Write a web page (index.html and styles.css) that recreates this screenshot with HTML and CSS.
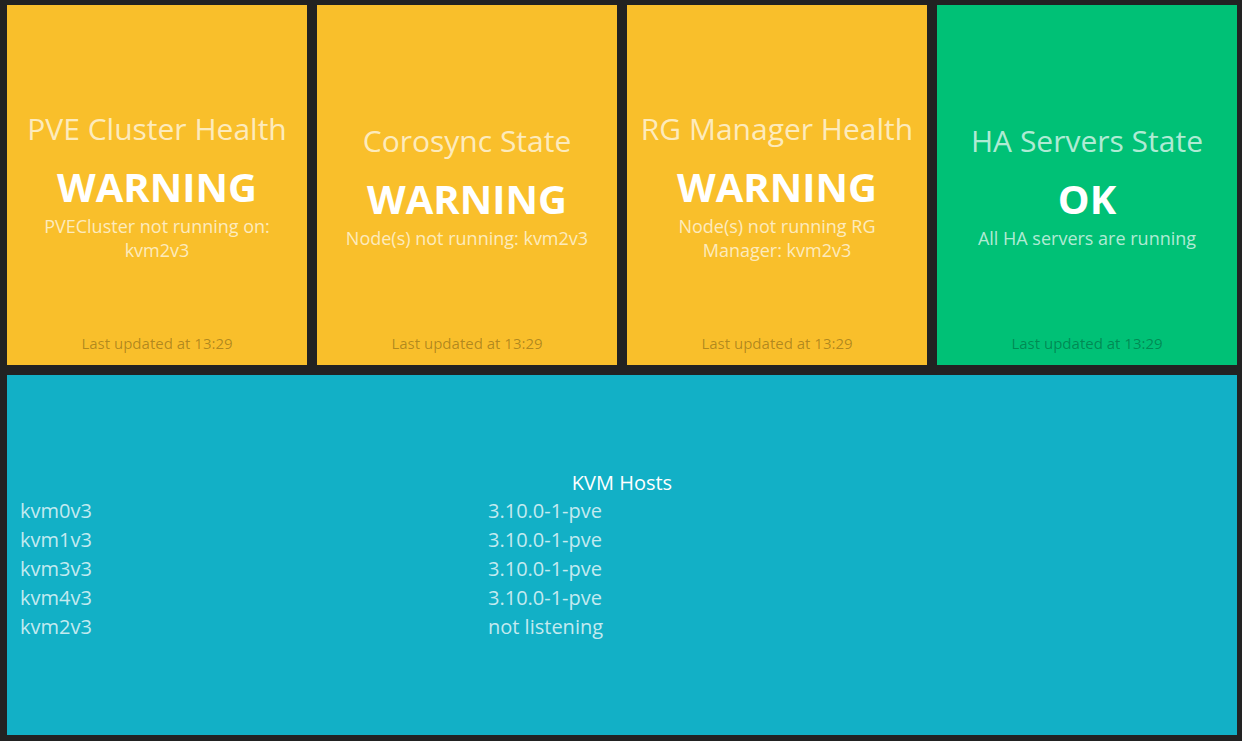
FILE: index.html
```html
<!DOCTYPE html>
<html lang="en">
<head>
<meta charset="utf-8">
<title>Dashboard</title>
<link rel="stylesheet" href="styles.css">
</head>
<body>
<div class="dashboard">
  <div class="tile tile-warning">
    <div class="tile-body">
      <h1 class="title">PVE Cluster Health</h1>
      <h2 class="value">WARNING</h2>
      <p class="info">PVECluster not running on: kvm2v3</p>
    </div>
    <p class="updated-at">Last updated at 13:29</p>
  </div>
  <div class="tile tile-warning">
    <div class="tile-body">
      <h1 class="title">Corosync State</h1>
      <h2 class="value">WARNING</h2>
      <p class="info">Node(s) not running: kvm2v3</p>
    </div>
    <p class="updated-at">Last updated at 13:29</p>
  </div>
  <div class="tile tile-warning">
    <div class="tile-body">
      <h1 class="title">RG Manager Health</h1>
      <h2 class="value">WARNING</h2>
      <p class="info">Node(s) not running RG Manager: kvm2v3</p>
    </div>
    <p class="updated-at">Last updated at 13:29</p>
  </div>
  <div class="tile tile-ok">
    <div class="tile-body">
      <h1 class="title">HA Servers State</h1>
      <h2 class="value">OK</h2>
      <p class="info">All HA servers are running</p>
    </div>
    <p class="updated-at">Last updated at 13:29</p>
  </div>
  <div class="tile tile-wide tile-list">
    <div class="tile-body">
      <h1 class="list-title">KVM Hosts</h1>
      <div class="hosts">
        <span class="host">kvm0v3</span><span class="ver">3.10.0-1-pve</span>
        <span class="host">kvm1v3</span><span class="ver">3.10.0-1-pve</span>
        <span class="host">kvm3v3</span><span class="ver">3.10.0-1-pve</span>
        <span class="host">kvm4v3</span><span class="ver">3.10.0-1-pve</span>
        <span class="host">kvm2v3</span><span class="ver">not listening</span>
      </div>
    </div>
  </div>
</div>
</body>
</html>
```

FILE: styles.css
```css
html, body {
  margin: 0;
  padding: 0;
  background: #ffffff;
}

.dashboard {
  width: 1242px;
  min-height: 741px;
  box-sizing: border-box;
  padding: 5px 5px 6px 7px;
  background: #222222;
  display: grid;
  grid-template-columns: repeat(4, 300px);
  grid-auto-rows: 360px;
  gap: 10px;
  font-family: "Open Sans", "Liberation Sans", sans-serif;
}

.tile {
  position: relative;
  display: flex;
  align-items: center;
  justify-content: center;
  padding: 0 12px;
  box-sizing: border-box;
  text-align: center;
  color: #ffffff;
}

.tile-body {
  width: 100%;
}

.tile-warning { background: #f9bf2b; }
.tile-ok { background: #00c176; }
.tile-list {
  background: #12b0c6;
  padding-bottom: 2px;
}

.tile-wide {
  grid-column: 1 / span 4;
}

.title {
  margin: 0 0 10px;
  font-size: 30px;
  font-weight: 400;
  line-height: normal;
  color: rgba(255, 255, 255, 0.7);
}

.value {
  margin: 0;
  font-size: 40px;
  font-weight: 700;
  line-height: normal;
  color: #ffffff;
}

.info {
  margin: 0;
  font-size: 18px;
  line-height: normal;
  color: rgba(255, 255, 255, 0.7);
}

.updated-at {
  position: absolute;
  left: 0;
  right: 0;
  bottom: 12px;
  margin: 0;
  font-size: 15px;
  line-height: normal;
  color: rgba(0, 0, 0, 0.3);
}

.list-title {
  margin: 0 0 -1px;
  font-size: 20px;
  font-weight: 400;
  line-height: 29px;
  color: #ffffff;
}

.hosts {
  display: grid;
  grid-template-columns: 468px 1fr;
  padding-left: 1px;
  text-align: left;
  font-size: 20px;
  line-height: 29px;
  color: rgba(255, 255, 255, 0.75);
}
```
